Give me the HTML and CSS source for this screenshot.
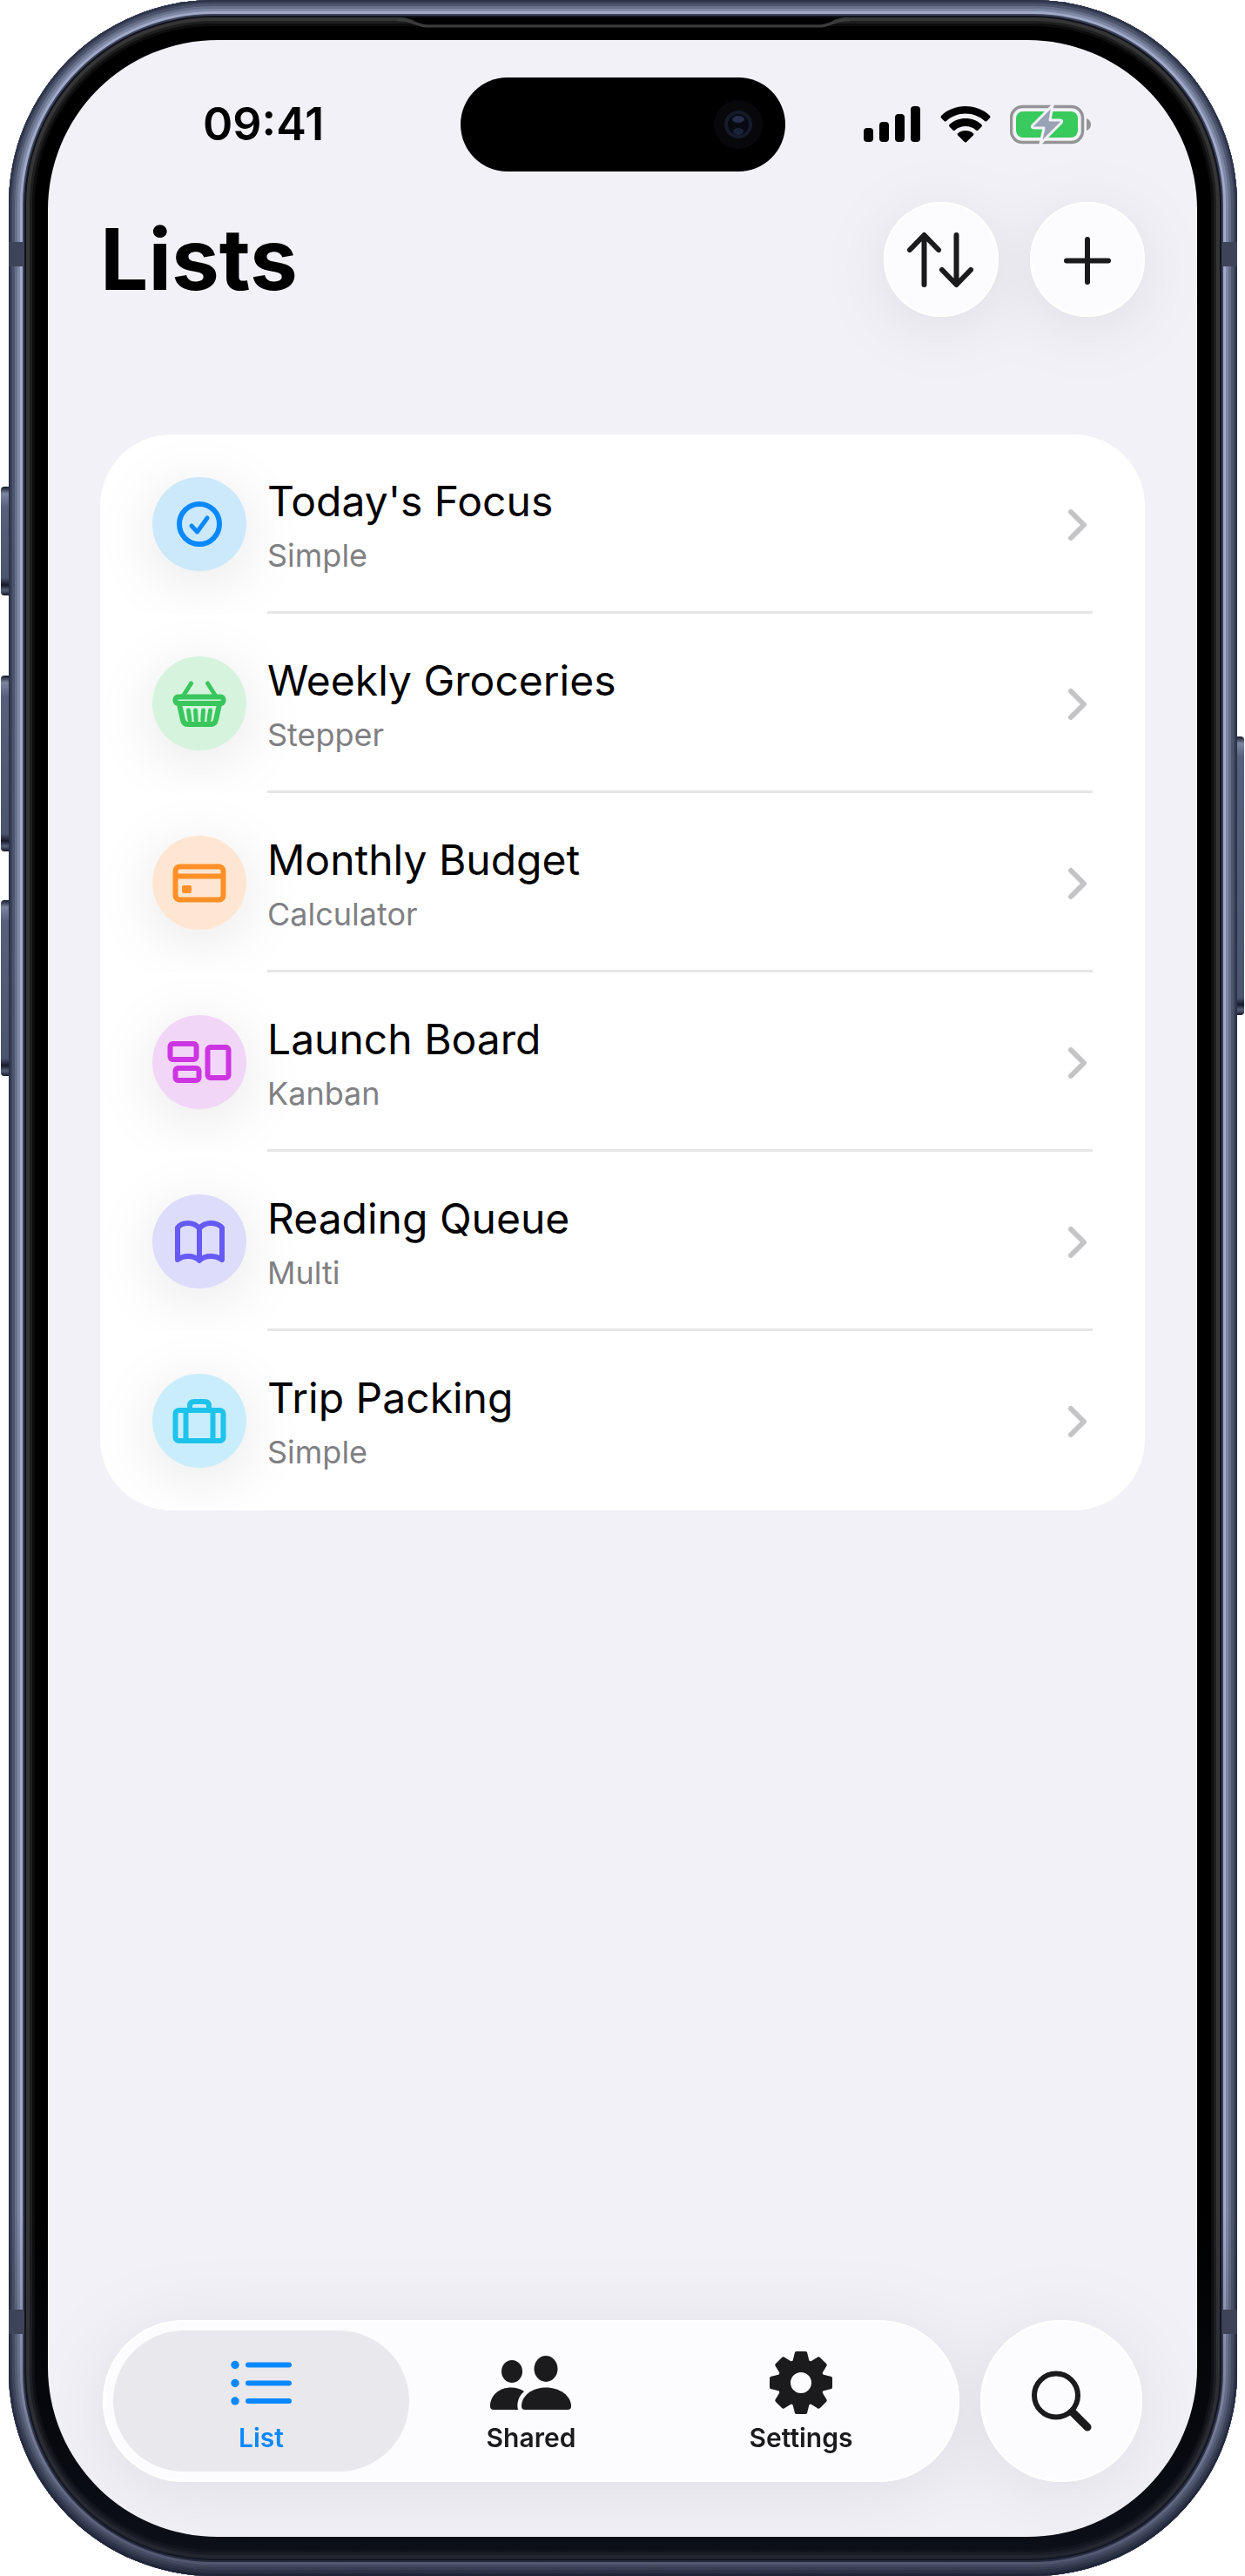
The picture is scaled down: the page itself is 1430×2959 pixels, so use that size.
FILE: index.html
```html
<!DOCTYPE html>
<html lang="en">
<head>
<meta charset="UTF-8">
<meta name="viewport" content="width=device-width, initial-scale=1.0">
<title>Lists</title>
<link rel="stylesheet" href="styles.css">
</head>
<body>
<div class="device">
    <!-- side buttons -->
    <span class="side-key action"></span>
    <span class="side-key volume-up"></span>
    <span class="side-key volume-down"></span>
    <span class="side-key power"></span>

    <div class="frame">
        <!-- antenna lines -->
        <span class="antenna top"></span>
        <span class="antenna bottom"></span>
        <!-- earpiece -->
        <svg class="earpiece" viewBox="0 0 520 18" preserveAspectRatio="none">
            <path d="M4 0 C18 0 22 8 36 8 H484 C498 8 502 0 516 0 Z" fill="#000"/>
            <path d="M0 3 H4 C18 3 22 10 36 10 H484 C498 10 502 3 516 3 H520" fill="none" stroke="#3c3c3e" stroke-width="3"/>
        </svg>

        <div class="screen">
            <header class="status-bar">
                <span class="time">09:41</span>
                <div class="island">
                    <svg class="camera" viewBox="0 0 80 80">
                        <circle cx="40" cy="40" r="28" fill="#08080a"/>
                        <circle cx="40" cy="40" r="16" fill="#161a2a"/>
                        <circle cx="40" cy="40" r="12" fill="#080a12"/>
                        <ellipse cx="40" cy="34" rx="7" ry="4" fill="#262d4a"/>
                        <ellipse cx="40" cy="48" rx="6" ry="4" fill="#1b2138"/>
                    </svg>
                </div>
                <div class="status-icons">
                    <svg class="signal" viewBox="0 0 66 42">
                        <rect x="0" y="25" width="11" height="16" rx="4"/>
                        <rect x="18" y="18" width="11" height="23" rx="4"/>
                        <rect x="36" y="9" width="11" height="32" rx="4"/>
                        <rect x="54" y="0" width="11" height="41" rx="4"/>
                    </svg>
                    <svg class="wifi" viewBox="0 0 58 42">
                        <path d="M29 0 C40 0 50 4 57 11 Q58 12.500 57 13.500 L53.500 17 Q52.500 18 51 17 C45 11.500 37.500 8.500 29 8.500 C20.500 8.500 13 11.500 7 17 Q5.500 18 4.500 17 L1 13.500 Q0 12.500 1 11 C8 4 18 0 29 0 Z"/>
                        <path d="M29 14 C36 14 42.500 16.500 47.500 21 Q48.500 22.500 47.500 23.500 L43.500 27.500 Q42.500 28.500 41 27.500 C38 24.500 33.500 23 29 23 C24.500 23 20 24.500 17 27.500 Q15.500 28.500 14.500 27.500 L10.500 23.500 Q9.500 22.500 10.500 21 C15.500 16.500 22 14 29 14 Z"/>
                        <path d="M29 28 C32.500 28 35.500 29.200 37.800 31.200 Q38.800 32.500 37.800 33.500 L30.200 41 Q29 42 27.800 41 L20.200 33.500 Q19.200 32.500 20.200 31.200 C22.500 29.200 25.500 28 29 28 Z"/>
                    </svg>
                    <svg class="battery" viewBox="0 0 94 46">
                        <rect x="1.500" y="2.500" width="82" height="41" rx="13" fill="none" stroke="#949496" stroke-width="3.500"/>
                        <path d="M88 16 Q93 18 93 23 Q93 28 88 30 Z" fill="#949496"/>
                        <rect x="7" y="8" width="71" height="30" rx="8" fill="#39ca5d"/>
                        <path d="M49 1 L26 24 Q24 27 28 27 H39 L35 45 L59 21 Q61 18 57 18 H46 Z" fill="#9aa3b5" stroke="#f2f1f7" stroke-width="3" stroke-linejoin="round"/>
                    </svg>
                </div>
            </header>

            <div class="title-bar">
                <h1>Lists</h1>
                <div class="actions">
                    <button class="round-button" type="button" aria-label="Sort">
                        <svg viewBox="0 0 132 132">
                            <path d="M46.500 95 V39 M30 55 L46.500 38 L63 55 M83.500 38 V94 M67 78 L83.500 95 L100 78"/>
                        </svg>
                    </button>
                    <button class="round-button" type="button" aria-label="Add list">
                        <svg viewBox="0 0 132 132">
                            <path d="M66 43 V92 M42 67.500 H90"/>
                        </svg>
                    </button>
                </div>
            </div>

            <main class="lists">
                <a class="row" href="#focus">
                    <span class="badge blue">
                        <svg viewBox="0 0 108 108">
                            <circle cx="54" cy="54" r="23"/>
                            <path class="thin" d="M45 56 L51.500 63 L63 47"/>
                        </svg>
                    </span>
                    <span class="row-body">
                        <span class="row-text"><span class="name">Today's Focus</span><span class="kind">Simple</span></span>
                        <svg class="chevron" viewBox="0 0 24 40"><path d="M5 5 L20 20 L5 35"/></svg>
                    </span>
                </a>
                <a class="row" href="#groceries">
                    <span class="badge green">
                        <svg viewBox="0 0 108 108">
                            <path class="thin" d="M35 46 L44.500 31 M73 46 L63.500 31"/>
                            <rect x="26.500" y="46.500" width="55" height="7.500" rx="3"/>
                            <path d="M31 55 L35 73 Q36 78 41 78 H67 Q72 78 73 73 L77 55"/>
                            <path class="thin" d="M41.500 62 L43 73 M49.500 62 L50.200 73 M58.500 62 L57.800 73 M66.500 62 L65 73"/>
                        </svg>
                    </span>
                    <span class="row-body">
                        <span class="row-text"><span class="name">Weekly Groceries</span><span class="kind">Stepper</span></span>
                        <svg class="chevron" viewBox="0 0 24 40"><path d="M5 5 L20 20 L5 35"/></svg>
                    </span>
                </a>
                <a class="row" href="#budget">
                    <span class="badge orange">
                        <svg viewBox="0 0 108 108">
                            <rect x="26.500" y="35.500" width="55" height="38" rx="5"/>
                            <path d="M27 46.500 H81"/>
                            <rect class="solid" x="34" y="57" width="11" height="9" rx="2"/>
                        </svg>
                    </span>
                    <span class="row-body">
                        <span class="row-text"><span class="name">Monthly Budget</span><span class="kind">Calculator</span></span>
                        <svg class="chevron" viewBox="0 0 24 40"><path d="M5 5 L20 20 L5 35"/></svg>
                    </span>
                </a>
                <a class="row" href="#launch">
                    <span class="badge purple">
                        <svg viewBox="0 0 108 108">
                            <rect x="20.500" y="33" width="30" height="18" rx="3"/>
                            <rect x="26.500" y="61" width="27" height="14" rx="3"/>
                            <rect x="63.500" y="37" width="24" height="35" rx="3"/>
                        </svg>
                    </span>
                    <span class="row-body">
                        <span class="row-text"><span class="name">Launch Board</span><span class="kind">Kanban</span></span>
                        <svg class="chevron" viewBox="0 0 24 40"><path d="M5 5 L20 20 L5 35"/></svg>
                    </span>
                </a>
                <a class="row" href="#reading">
                    <span class="badge indigo">
                        <svg viewBox="0 0 108 108">
                            <path d="M54 39 Q49 33 41 33 Q33 33 29 38 V75 Q34 71 41 71 Q49 71 54 76 Q59 71 67 71 Q74 71 80 75 V38 Q75 33 67 33 Q59 33 54 39 V75"/>
                        </svg>
                    </span>
                    <span class="row-body">
                        <span class="row-text"><span class="name">Reading Queue</span><span class="kind">Multi</span></span>
                        <svg class="chevron" viewBox="0 0 24 40"><path d="M5 5 L20 20 L5 35"/></svg>
                    </span>
                </a>
                <a class="row" href="#trip">
                    <span class="badge cyan">
                        <svg viewBox="0 0 108 108">
                            <rect x="26.500" y="42" width="55" height="35" rx="4"/>
                            <path d="M38.500 42 V77 M69.500 42 V77 M43 41 V37 Q43 32 48 32 H60 Q65 32 65 37 V41"/>
                        </svg>
                    </span>
                    <span class="row-body">
                        <span class="row-text"><span class="name">Trip Packing</span><span class="kind">Simple</span></span>
                        <svg class="chevron" viewBox="0 0 24 40"><path d="M5 5 L20 20 L5 35"/></svg>
                    </span>
                </a>
            </main>

            <nav class="bottom-bar">
                <div class="tabs">
                    <a class="tab active" href="#list">
                        <svg viewBox="-12 0 96 78">
                            <path d="M21 18.500 H68 M21 39.500 H68 M21 60 H68" fill="none" stroke="currentColor" stroke-width="6" stroke-linecap="round"/>
                            <circle cx="6" cy="18.500" r="4.700"/>
                            <circle cx="6" cy="39.500" r="4.700"/>
                            <circle cx="6" cy="60" r="4.700"/>
                        </svg>
                        <span>List</span>
                    </a>
                    <a class="tab" href="#shared">
                        <svg viewBox="0 0 96 78">
                            <ellipse cx="26" cy="26" rx="12" ry="13"/>
                            <ellipse cx="65" cy="23" rx="13.500" ry="15"/>
                            <path d="M5 70 Q1 70 1 66 C1 53 12 44.500 25 44.500 C31 44.500 36 46 40 49 C34 54 31 62 33 70 Z"/>
                            <path d="M41 70 Q37 70 37 66 C37 54 49 44.500 65 44.500 C81 44.500 94 54 94 66 Q94 70 90 70 Z"/>
                        </svg>
                        <span>Shared</span>
                    </a>
                    <a class="tab" href="#settings">
                        <svg viewBox="0 0 96 78">
                            <path id="tooth" d="M38 16 L41 4 Q41.500 3 43 3 H53 Q54.500 3 55 4 L58 16 Z"/>
                            <use href="#tooth" transform="rotate(45 48 39)"/>
                            <use href="#tooth" transform="rotate(90 48 39)"/>
                            <use href="#tooth" transform="rotate(135 48 39)"/>
                            <use href="#tooth" transform="rotate(180 48 39)"/>
                            <use href="#tooth" transform="rotate(225 48 39)"/>
                            <use href="#tooth" transform="rotate(270 48 39)"/>
                            <use href="#tooth" transform="rotate(315 48 39)"/>
                            <circle cx="48" cy="39" r="19.500" fill="none" stroke="currentColor" stroke-width="15"/>
                        </svg>
                        <span>Settings</span>
                    </a>
                </div>
                <button class="search" type="button" aria-label="Search">
                    <svg viewBox="0 0 186 186">
                        <circle cx="87" cy="86.500" r="25"/>
                        <path class="handle" d="M106 106 L123 123"/>
                    </svg>
                </button>
            </nav>
        </div>
    </div>
</div>
</body>
</html>
```

FILE: styles.css
```css
* {
    box-sizing: border-box;
}

body {
    margin: 0;
    background: #fff;
    color: #000;
    font-family: Inter, "Liberation Sans", sans-serif;
}

a {
    color: inherit;
    text-decoration: none;
}

button {
    padding: 0;
    border: 0;
    cursor: pointer;
}

svg {
    display: block;
}

/* phone body */
.device {
    position: relative;
    display: flex;
    min-height: 100vh;
    padding: 0 9px 0 10px;
}

.frame {
    position: relative;
    flex: 1;
    display: flex;
    padding: 46px 46px 45px 45px;
    border-radius: 235px;
    background: #000;
    box-shadow:
        inset 0 0 0 2px #2c3348,
        inset 0 0 0 4px #3b435a,
        inset 0 0 0 7px #4d556e,
        inset 0 0 0 10px #667089,
        inset 0 0 0 13px #7f88a5,
        inset 0 0 0 16px #a0a9c8,
        inset 0 0 0 18px #3c435a,
        inset 0 0 0 20px #10131c,
        inset 0 0 0 24px #353536,
        inset 0 0 0 27px #1e1e1f,
        inset 0 0 0 30px #0d0d0d;
}

/* the metal gets darker towards the lower edge */
.frame::before {
    content: "";
    position: absolute;
    inset: 0;
    border-radius: inherit;
    background: linear-gradient(to top, rgba(22, 27, 44, 0.6), rgba(22, 27, 44, 0.3) 180px, rgba(22, 27, 44, 0) 420px);
}

.side-key {
    position: absolute;
    left: 1px;
    width: 14px;
    border-radius: 4px;
    background: linear-gradient(#141826, #7c86a3 8px, #56607c 24px, #4c556f calc(100% - 20px), #161a28 calc(100% - 12px), #59617c calc(100% - 6px), #141826);
}

.action {
    top: 559px;
    height: 125px;
}

.volume-up {
    top: 776px;
    height: 202px;
}

.volume-down {
    top: 1034px;
    height: 202px;
}

.power {
    left: auto;
    right: 1px;
    top: 846px;
    height: 320px;
}

.antenna {
    position: absolute;
    left: 0;
    right: 0;
    height: 28px;
    background:
        linear-gradient(#3d4358, #3d4358) left / 18px 100% no-repeat,
        linear-gradient(#3d4358, #3d4358) right / 18px 100% no-repeat;
}

.antenna.top {
    top: 278px;
}

.antenna.bottom {
    bottom: 278px;
}

.earpiece {
    position: absolute;
    top: 20px;
    left: 50%;
    width: 520px;
    height: 18px;
    margin-left: -260px;
}

.screen {
    position: relative;
    flex: 1;
    display: flex;
    flex-direction: column;
    overflow: hidden;
    border-radius: 195px;
    background: #f2f1f7;
}

/* status bar */
.status-bar {
    display: grid;
    grid-template-columns: 1fr 373px 1fr;
    align-items: center;
    padding-top: 43px;
}

.time {
    padding-left: 178px;
    font-size: 52px;
    line-height: 60px;
    font-weight: 600;
}

.island {
    display: flex;
    justify-content: flex-end;
    align-items: center;
    height: 108px;
    padding-right: 14px;
    border-radius: 54px;
    background: #000;
}

.camera {
    width: 80px;
    height: 80px;
}

.status-icons {
    display: flex;
    justify-content: flex-end;
    align-items: center;
    gap: 22px;
    padding-right: 121px;
}

.signal {
    width: 66px;
    height: 42px;
}

.wifi {
    width: 58px;
    height: 42px;
}

.battery {
    width: 94px;
    height: 46px;
}

/* title and actions */
.title-bar {
    display: flex;
    align-items: center;
    padding: 35px 60px 0 60px;
}

h1 {
    flex: 1;
    margin: 0;
    font-size: 98px;
    line-height: 120px;
    font-weight: 700;
}

.actions {
    display: flex;
    gap: 36px;
    filter: drop-shadow(0 12px 36px rgba(0, 0, 0, 0.08));
}

.round-button {
    width: 132px;
    height: 132px;
    border-radius: 50%;
    background: #fcfcfe;
    box-shadow: inset 0 0 0 2px #fff;
}

.round-button svg,
.search svg {
    fill: none;
    stroke: #1b1b1d;
    stroke-width: 6;
    stroke-linecap: round;
    stroke-linejoin: round;
}

/* lists card */
.lists {
    margin: 135px 60px 0;
    overflow: hidden;
    border-radius: 82px;
    background: #fff;
}

.row {
    display: flex;
    align-items: center;
    gap: 24px;
    height: 206px;
    padding: 0 60px;
    overflow: hidden;
}

.badge {
    width: 108px;
    height: 108px;
    border-radius: 50%;
    box-shadow: 0 12px 72px rgba(0, 0, 0, 0.1);
}

.badge svg {
    fill: none;
    stroke: currentColor;
    stroke-width: 6;
    stroke-linecap: round;
    stroke-linejoin: round;
}

.badge .thin {
    stroke-width: 5;
}

.badge .solid {
    fill: currentColor;
    stroke: none;
}

.blue {
    background: #cce9fc;
    color: #0a88ff;
}

.green {
    background: #d6f3de;
    color: #39c75d;
}

.orange {
    background: #ffe6d2;
    color: #ff9028;
}

.purple {
    background: #f2d6f7;
    color: #cd35e2;
}

.indigo {
    background: #dddcfb;
    color: #655af5;
}

.cyan {
    background: #caedfb;
    color: #1ec3ec;
}

.row-body {
    flex: 1;
    display: flex;
    align-items: center;
    justify-content: space-between;
    height: 206px;
    padding-top: 4px;
    border-bottom: 3px solid #e6e6e6;
}

.row:last-child .row-body {
    border-bottom-color: transparent;
}

.row-text {
    display: flex;
    flex-direction: column;
    gap: 6px;
}

.name {
    font-size: 48px;
    line-height: 64px;
}

.kind {
    color: #808083;
    font-size: 36px;
    line-height: 48px;
}

.chevron {
    width: 24px;
    height: 40px;
    margin-right: 6px;
    fill: none;
    stroke: #c4c4c6;
    stroke-width: 6;
    stroke-linecap: round;
    stroke-linejoin: round;
}

/* tab bar */
.bottom-bar {
    display: flex;
    gap: 24px;
    margin-top: auto;
    padding: 63px;
    filter: drop-shadow(0 12px 45px rgba(0, 0, 0, 0.08));
}

.tabs {
    flex: 1;
    display: flex;
    height: 186px;
    padding: 12px;
    border-radius: 93px;
    background: #fcfcfe;
    box-shadow: inset 0 0 0 2px #fff;
}

.tab {
    flex: 1;
    display: flex;
    flex-direction: column;
    align-items: center;
    gap: 6px;
    padding-top: 21px;
    border-radius: 81px;
    color: #1b1b1d;
    font-size: 30px;
    line-height: 36px;
    font-weight: 600;
}

.tab + .tab {
    margin-left: -30px;
}

.tab.active {
    background: #e9e9ed;
    color: #0a88ff;
}

.tab svg {
    width: 96px;
    height: 78px;
    fill: currentColor;
}

.search {
    width: 186px;
    height: 186px;
    border-radius: 50%;
    background: #fcfcfe;
    box-shadow: inset 0 0 0 2px #fff;
}

.search .handle {
    stroke-width: 9;
}
```
